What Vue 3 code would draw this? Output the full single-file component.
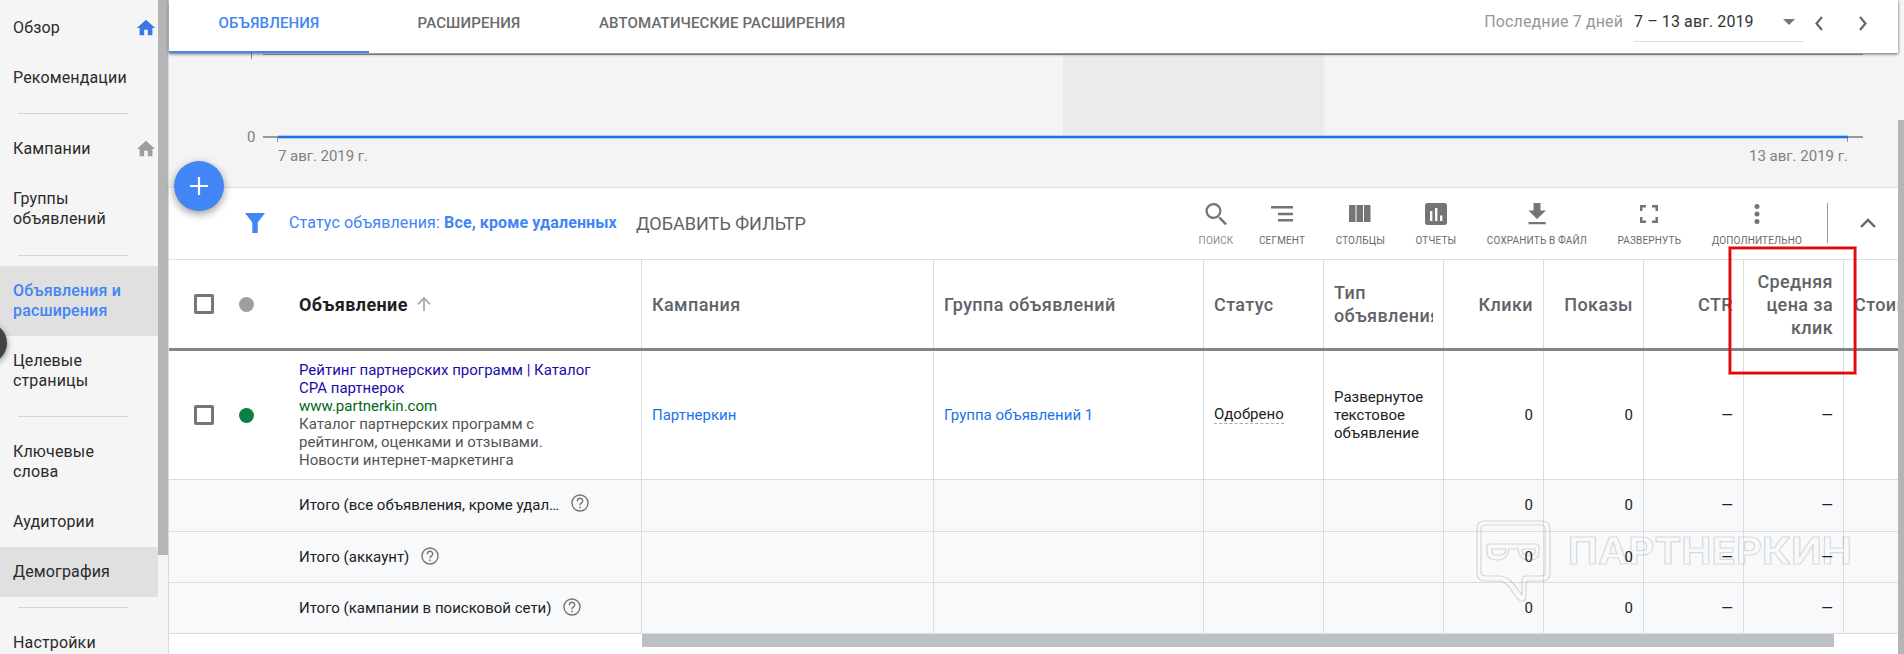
<template>
    <div class="page">
        <aside class="sidebar">
            <nav class="nav">
                <template v-for="(item, index) in menu" :key="index">
                    <div v-if="item.divider" class="divider" :class="item.divider"></div>
                    <a v-else class="nav-item" :class="{ active: item.active, hovered: item.hovered }">
                        <span class="nav-label">{{ item.label }}</span>
                        <svg v-if="item.home" class="home" :class="item.home" viewBox="0 0 24 24">
                            <path d="M10 20v-6h4v6h5v-8h3L12 3 2 12h3v8z" />
                        </svg>
                    </a>
                </template>
            </nav>
            <div class="sidebar-scroll">
                <div class="sidebar-thumb"></div>
            </div>
            <div class="drawer-toggle"></div>
        </aside>

        <main class="main">
            <header class="header">
                <div class="tabs">
                    <div v-for="tab in tabs" :key="tab" class="tab" :class="{ current: tab === currentTab }">
                        <span>{{ tab }}</span>
                    </div>
                </div>
                <div class="period">
                    <span class="period-name">Последние 7 дней</span>
                    <div class="period-select">
                        <span>7 – 13 авг. 2019</span>
                        <i class="caret"></i>
                    </div>
                    <svg class="arrow prev" viewBox="0 0 8 15"><path d="M7 1L1.500 7.500L7 14" /></svg>
                    <svg class="arrow next" viewBox="0 0 8 15"><path d="M1 1L6.500 7.500L1 14" /></svg>
                </div>
            </header>

            <section class="chart">
                <svg class="chart-svg" viewBox="0 0 1729 134" width="1729" height="134">
                    <rect x="894" y="0" width="261.500" height="82" fill="#ebebeb" />
                    <path d="M94 1.500H1694" stroke="#9e9e9e" />
                    <path d="M82.500 0V6" stroke="#8a8a8a" />
                    <path d="M94 84H1694" stroke="#999" stroke-width="2" />
                    <path d="M108.500 84V89M1678.500 84V89" stroke="#999" />
                    <path d="M109 84H1679" stroke="#1a73e8" stroke-opacity="0.3" stroke-width="4" />
                    <path d="M109 84H1679" stroke="#1a73e8" stroke-width="2" />
                    <text x="78" y="89" textLength="8">0</text>
                    <text x="109" y="108" textLength="90">7 авг. 2019 г.</text>
                    <text x="1580" y="108" textLength="99">13 авг. 2019 г.</text>
                </svg>
                <button class="fab">
                    <svg viewBox="0 0 18 18"><path d="M9 0V18M0 9H18" /></svg>
                </button>
            </section>

            <section class="toolbar">
                <svg class="funnel" viewBox="0 0 20 20"><path d="M0 0H20L12.700 9.500V20H7.300V9.500Z" /></svg>
                <div class="filter">Статус объявления: <b>Все, кроме удаленных</b></div>
                <div class="add-filter">ДОБАВИТЬ ФИЛЬТР</div>
                <div class="tools">
                    <div v-for="tool in tools" :key="tool.label" class="tool" :class="{ muted: tool.muted }">
                        <svg viewBox="0 0 26 26"><path :d="tool.icon" /></svg>
                        <span>{{ tool.label }}</span>
                    </div>
                </div>
                <div class="separator"></div>
                <svg class="collapse" viewBox="0 0 16 10"><path d="M1 9L8 2L15 9" /></svg>
            </section>

            <section class="table">
                <div class="row head">
                    <div class="cell ad-cell">
                        <i class="checkbox"></i>
                        <i class="dot"></i>
                        <span class="sorted">Объявление</span>
                        <svg class="sort" viewBox="0 0 14 14"><path d="M7 14V1M1 7.200L7 1L13 7.200" /></svg>
                    </div>
                    <div v-for="col in columns" :key="col.title" class="cell" :class="{ num: col.num }">
                        <span class="title">{{ col.title }}</span>
                    </div>
                </div>
                <div class="row body">
                    <div class="cell ad-cell">
                        <i class="checkbox"></i>
                        <i class="dot enabled"></i>
                        <div class="ad">
                            <div class="ad-title">Рейтинг партнерских программ | Каталог<br>CPA партнерок</div>
                            <div class="ad-url">www.partnerkin.com</div>
                            <div class="ad-text">Каталог партнерских программ с<br>рейтингом, оценками и отзывами.<br>Новости интернет-маркетинга</div>
                        </div>
                    </div>
                    <div class="cell"><a class="link">Партнеркин</a></div>
                    <div class="cell"><a class="link">Группа объявлений 1</a></div>
                    <div class="cell"><span class="approved">Одобрено</span></div>
                    <div class="cell"><span>Развернутое текстовое объявление</span></div>
                    <div v-for="(value, i) in values" :key="i" class="cell num">{{ value }}</div>
                </div>
                <div v-for="total in totals" :key="total" class="row total">
                    <div class="cell total-cell">
                        <span>{{ total }}</span>
                        <svg class="help" viewBox="0 0 18 18">
                            <circle cx="9" cy="9" r="8" />
                            <path d="M6.300 7.200C6.300 3.300 11.700 3.500 11.700 6.900C11.700 8.900 9 8.900 9 11.200M9 12.500V14.200" />
                        </svg>
                    </div>
                    <div v-for="n in 4" :key="n" class="cell"></div>
                    <div v-for="(value, i) in values" :key="i" class="cell num">{{ value }}</div>
                </div>
                <div class="table-scroll"></div>

                <svg class="watermark" viewBox="0 0 378 84" width="378" height="84">
                    <path d="M9 2H67Q75 2 75 10V54Q75 62 67 62H54Q51 62 51 65V78Q51 82 47 82Q44 82 42 79C35 70 32 63 25 62H9Q2 62 2 54V10Q2 2 9 2Z" />
                    <path d="M11 6H66Q70 6 70 10V53Q70 57 66 57H51Q47 57 47 61V76C41 70 37 58 25 57H11Q6 57 6 53V10Q6 6 11 6Z" />
                    <path d="M15 25H61Q64 25 64 28V33Q64 41 55 41Q44 41 43 30H34Q33 41 22 41Q12 41 12 33V28Q12 25 15 25Z" />
                    <path d="M17 30H31Q31 36 25 36H20Q17 36 17 33ZM47 30H60V33Q60 36 56 36H51Q47 36 47 30Z" />
                    <text x="93" y="45" textLength="284" lengthAdjust="spacingAndGlyphs">ПАРТНЕРКИН</text>
                </svg>
                <div class="highlight"></div>
            </section>
        </main>

        <div class="page-scroll">
            <div class="page-thumb"></div>
        </div>
    </div>
</template>

<script setup>
import { ref } from 'vue'

const menu = [
    { label: 'Обзор', home: 'blue' },
    { label: 'Рекомендации' },
    { divider: 'narrow' },
    { label: 'Кампании', home: 'gray' },
    { label: 'Группы объявлений' },
    { divider: 'wide' },
    { label: 'Объявления и расширения', active: true },
    { label: 'Целевые страницы' },
    { divider: 'narrow' },
    { label: 'Ключевые слова' },
    { label: 'Аудитории' },
    { label: 'Демография', hovered: true },
    { divider: 'narrow' },
    { label: 'Настройки' }
]

const tabs = ['ОБЪЯВЛЕНИЯ', 'РАСШИРЕНИЯ', 'АВТОМАТИЧЕСКИЕ РАСШИРЕНИЯ']
const currentTab = ref('ОБЪЯВЛЕНИЯ')

const tools = [
    {
        label: 'ПОИСК',
        muted: true,
        icon: 'M10.500 2a8 8 0 1 0 4.900 14.300l.6.600v1.100l6.200 6.200 1.800-1.800-6.200-6.200h-1.100l-.6-.6A8 8 0 0 0 10.500 2zm0 2.200a5.800 5.800 0 1 1 0 11.600 5.800 5.800 0 0 1 0-11.600z'
    },
    { label: 'СЕГМЕНТ', icon: 'M2 5h22v2.500H2zM9 11.700h15v2.500H9zM9 18h15v2.500H9z' },
    { label: 'СТОЛБЦЫ', icon: 'M2 4h6.500v17H2zM9.500 4h6.500v17H9.500zM17 4h6.500v17H17z' },
    {
        label: 'ОТЧЕТЫ',
        icon: 'M4.500 2h17A2.500 2.500 0 0 1 24 4.500v17a2.500 2.500 0 0 1-2.500 2.500h-17A2.500 2.500 0 0 1 2 21.500v-17A2.500 2.500 0 0 1 4.500 2zM7 10v10h2.400V10zM12 7v13h2.400V7zM17 14.500V20h2.400v-5.500z'
    },
    { label: 'СОХРАНИТЬ В ФАЙЛ', icon: 'M9.500 2h7v7.500H22L13 18 4.500 9.500h5zM4.500 21h17.200v2.300H4.500z' },
    {
        label: 'РАЗВЕРНУТЬ',
        icon: 'M4 4h6v2.500H6.500V10H4zM16 4h6v6h-2.500V6.500H16zM4 16h2.500v3.500H10V22H4zM19.500 16H22v6h-6v-2.500h3.500z'
    },
    {
        label: 'ДОПОЛНИТЕЛЬНО',
        icon: 'M10.500 5.500a2.500 2.500 0 1 0 5 0a2.500 2.500 0 1 0-5 0zM10.500 13a2.500 2.500 0 1 0 5 0a2.500 2.500 0 1 0-5 0zM10.500 20.500a2.500 2.500 0 1 0 5 0a2.500 2.500 0 1 0-5 0z'
    }
]

const columns = [
    { title: 'Кампания' },
    { title: 'Группа объявлений' },
    { title: 'Статус' },
    { title: 'Тип объявления' },
    { title: 'Клики', num: true },
    { title: 'Показы', num: true },
    { title: 'CTR', num: true },
    { title: 'Средняя цена за клик', num: true },
    { title: 'Стоимость' }
]

const values = ['0', '0', '—', '—', '']

const totals = [
    'Итого (все объявления, кроме удал…',
    'Итого (аккаунт)',
    'Итого (кампании в поисковой сети)'
]
</script>

<style>
body {
    margin: 0;
    overflow: hidden;
}
</style>

<style scoped>
.page {
    display: flex;
    width: 1904px;
    height: 654px;
    overflow: hidden;
    background: #fff;
    font-family: Roboto, "Liberation Sans", sans-serif;
    color: #202124;
}

.page * {
    box-sizing: border-box;
}

.sidebar {
    position: relative;
    display: flex;
    flex: none;
    width: 169px;
    border-right: 1px solid #dadada;
    background: #f5f5f5;
}

.nav {
    width: 158px;
    padding-top: 3px;
    flex: none;
}

.nav-item {
    display: flex;
    justify-content: space-between;
    padding: 15px 1px 15px 13px;
    font-size: 16px;
    line-height: 20px;
    letter-spacing: 0.15px;
    color: #2b2b2b;
}

.nav-label {
    max-width: 125px;
}

.nav-item.active {
    background: #e0e0e0;
    color: #4285f4;
    font-weight: 500;
}

.nav-item.hovered {
    background: #e0e0e0;
}

.home {
    width: 22px;
    height: 22px;
    margin: -1px 0;
    flex: none;
}

.home.blue {
    fill: #3b78e7;
}

.home.gray {
    fill: #9e9e9e;
}

.divider {
    height: 1px;
    margin: 10px 30px 10px 18px;
    background: #d4d4d4;
}

.divider.wide {
    margin-top: 11px;
}

.sidebar-scroll {
    width: 10px;
}

.sidebar-thumb {
    height: 555px;
    background: #b5b5b5;
}

.drawer-toggle {
    position: absolute;
    left: -33px;
    top: 323px;
    width: 40px;
    height: 40px;
    border-radius: 50%;
    background: #424242;
    box-shadow: 0 2px 6px rgba(0, 0, 0, 0.45);
}

.main {
    width: 1729px;
    flex: none;
    display: flex;
    flex-direction: column;
}

.header {
    position: relative;
    z-index: 1;
    display: flex;
    justify-content: space-between;
    height: 53px;
    background: #fff;
    box-shadow: 0 1px 3px rgba(0, 0, 0, 0.6);
}

.tabs {
    display: flex;
}

.tab {
    display: flex;
    justify-content: center;
    min-width: 200px;
    padding: 13px 30px 0;
    font-size: 15px;
    line-height: 20px;
    font-weight: 500;
    letter-spacing: 0.14px;
    color: #6b6b6b;
    white-space: nowrap;
}

.tab.current {
    border-bottom: 2px solid #4285f4;
    color: #4285f4;
}

.period {
    display: flex;
    font-size: 16px;
    line-height: 20px;
    padding: 12px 31px 0 0;
}

.period-name {
    color: #979797;
    letter-spacing: 0.12px;
    margin-right: 11px;
}

.period-select {
    display: flex;
    justify-content: space-between;
    width: 170px;
    height: 30px;
    padding: 0 9px 0 0;
    border-bottom: 1px solid #dedede;
    color: #333;
    letter-spacing: 0.1px;
}

.caret {
    margin-top: 7px;
    width: 0;
    height: 0;
    border: 6px solid transparent;
    border-top: 6px solid #757575;
    border-bottom: 0;
}

.arrow {
    width: 8px;
    height: 15px;
    margin-top: 4px;
    fill: none;
    stroke: #666;
    stroke-width: 2.2;
}

.arrow.prev {
    margin-left: 11px;
}

.arrow.next {
    margin-left: 36px;
}

.chart {
    position: relative;
    height: 135px;
    flex: none;
    border-bottom: 1px solid #e0e0e0;
    background: #f4f4f4;
}

.chart-svg {
    display: block;
}

.chart-svg path {
    fill: none;
}

.chart-svg text {
    font-size: 15px;
    fill: #808080;
}

.fab {
    position: absolute;
    z-index: 2;
    left: 5px;
    top: 108px;
    display: flex;
    align-items: center;
    justify-content: center;
    width: 50px;
    height: 50px;
    padding: 0;
    border: 0;
    border-radius: 50%;
    background: #4285f4;
    box-shadow: 0 3px 8px rgba(0, 0, 0, 0.4);
}

.fab svg {
    width: 18px;
    height: 18px;
    stroke: #fff;
    stroke-width: 2.2;
}

.toolbar {
    display: flex;
    height: 72px;
    flex: none;
    border-bottom: 1px solid #e0e0e0;
    padding-left: 75.5px;
}

.funnel {
    width: 20px;
    height: 20px;
    margin-top: 25px;
    fill: #4285f4;
}

.filter {
    margin: 25px 0 0 24.5px;
    font-size: 16px;
    line-height: 20px;
    letter-spacing: 0.12px;
    color: #4285f4;
    white-space: nowrap;
    width: 328px;
}

.filter b {
    font-weight: 700;
}

.add-filter {
    margin: 25px 0 0 19px;
    font-size: 18px;
    line-height: 22px;
    color: #5f6368;
    white-space: nowrap;
}

.tools {
    display: flex;
    gap: 30.5px;
    margin-left: auto;
}

.tool {
    display: flex;
    flex-direction: column;
    align-items: center;
    padding-top: 13px;
    font-size: 10px;
    line-height: 12px;
    letter-spacing: 0.15px;
    color: #6b6b6b;
    white-space: nowrap;
}

.tool.muted {
    margin-right: -5px;
    color: #8d8d8d;
}

.tool svg {
    width: 26px;
    height: 26px;
    margin-bottom: 8px;
    fill: #757575;
    fill-rule: evenodd;
}

.separator {
    width: 1px;
    height: 40px;
    margin: 15px 32px 0 25px;
    background: #999;
}

.collapse {
    width: 16px;
    height: 10px;
    margin: 30px 22px 0 0;
    fill: none;
    stroke: #666;
    stroke-width: 2.4;
}

.table {
    position: relative;
    width: 1729px;
    flex: none;
    font-size: 15px;
    line-height: 18px;
}

.row {
    display: grid;
    grid-template-columns: 473px 292px 270px 120px 120px 100px 100px 100px 100px 54px;
    border-bottom: 1px solid #dadce0;
}

.cell {
    display: flex;
    align-items: center;
    min-width: 0;
    padding: 0 10px;
    border-right: 1px solid #dadce0;
    overflow: hidden;
}

.cell:last-child {
    border-right: 0;
    padding-right: 0;
}

.cell.num {
    justify-content: flex-end;
    text-align: right;
}

.head {
    height: 91px;
    border-bottom: 3px solid #80868b;
    font-size: 18px;
    line-height: 23px;
    font-weight: 500;
    letter-spacing: 0.4px;
    color: #5f6368;
}

.title {
    min-width: 0;
    overflow: hidden;
}

.ad-cell {
    padding: 0 0 0 25px;
}

.checkbox {
    flex: none;
    width: 20px;
    height: 20px;
    border: 3px solid #757575;
    border-radius: 2px;
}

.dot {
    flex: none;
    width: 15px;
    height: 15px;
    margin: 0 45px 0 25px;
    border-radius: 50%;
    background: #9e9e9e;
}

.dot.enabled {
    background: #0b8043;
}

.sorted {
    color: #202124;
    font-weight: 700;
}

.sort {
    width: 14px;
    height: 14px;
    margin-left: 9px;
    fill: none;
    stroke: #9e9e9e;
    stroke-width: 1.6;
}

.body {
    height: 129px;
}

.ad {
    white-space: nowrap;
}

.ad-title {
    color: #1a0dab;
}

.ad-url {
    color: #006621;
}

.ad-text {
    color: #545454;
}

.link {
    color: #1a73e8;
}

.approved {
    margin-top: -1px;
    border-bottom: 1px dashed #aaa;
}

.total {
    height: 51px;
    background: #f8f9fb;
}

.head + .body + .total {
    height: 52px;
}

.head + .body + .total .cell {
    padding-bottom: 2px;
}

.total-cell {
    padding-left: 130px;
}

.help {
    width: 18px;
    height: 18px;
    margin: -3px 0 0 12px;
    fill: none;
    stroke: #757575;
    stroke-width: 1.4;
}

.table-scroll {
    width: 1192px;
    height: 13px;
    margin-left: 473px;
    background: #bdc1c6;
}

.watermark {
    position: absolute;
    left: 1306px;
    top: 259px;
    fill: none;
    stroke: #000;
    stroke-opacity: 0.14;
    stroke-width: 1.2;
}

.watermark text {
    font-family: Inter, Roboto, sans-serif;
    font-size: 37px;
    font-weight: 700;
}

.highlight {
    position: absolute;
    left: 1560px;
    top: -13px;
    width: 127px;
    height: 127px;
    border: 2px solid #dd0b0b;
    box-shadow: 0 0 0 1px rgba(221, 11, 11, 0.5), inset 0 0 0 1px rgba(221, 11, 11, 0.4);
}

.page-scroll {
    width: 6px;
    flex: none;
    padding-top: 120px;
    background: #f4f4f4;
}

.page-thumb {
    height: 534px;
    background: #b5b5b5;
}
</style>
